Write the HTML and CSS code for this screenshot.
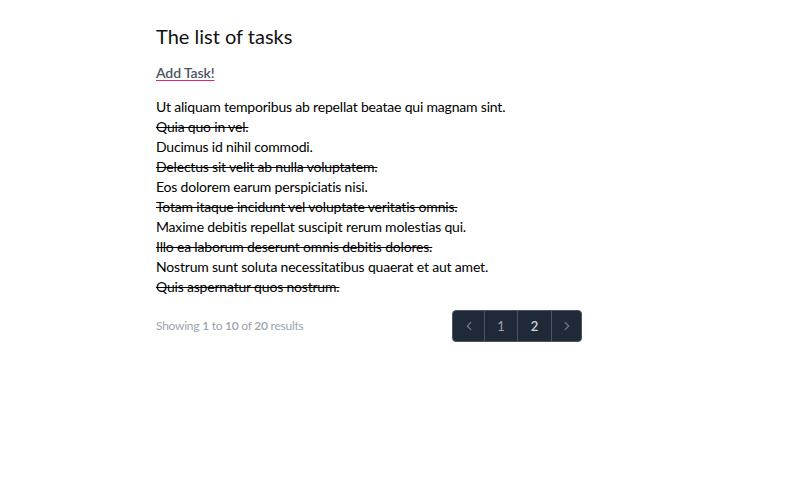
FILE: index.html
```html
<!DOCTYPE html>
<html lang="en">
<head>
<meta charset="utf-8">
<title>The list of tasks</title>
<link rel="stylesheet" href="styles.css">
</head>
<body>
<main class="page">
  <h1 class="title">The list of tasks</h1>
  <a class="add-link" href="#">Add Task!</a>
  <ul class="tasks">
    <li class="task">Ut aliquam temporibus ab repellat beatae qui magnam sint.</li>
    <li class="task done">Quia quo in vel.</li>
    <li class="task">Ducimus id nihil commodi.</li>
    <li class="task done">Delectus sit velit ab nulla voluptatem.</li>
    <li class="task">Eos dolorem earum perspiciatis nisi.</li>
    <li class="task done">Totam itaque incidunt vel voluptate veritatis omnis.</li>
    <li class="task">Maxime debitis repellat suscipit rerum molestias qui.</li>
    <li class="task done">Illo ea laborum deserunt omnis debitis dolores.</li>
    <li class="task">Nostrum sunt soluta necessitatibus quaerat et aut amet.</li>
    <li class="task done">Quis aspernatur quos nostrum.</li>
  </ul>
  <nav class="pager">
    <p class="summary">Showing <b>1</b> to <b>10</b> of <b>20</b> results</p>
    <div class="pages">
      <span class="pg pg-arrow pg-first" aria-disabled="true">
        <svg viewBox="0 0 20 20" width="14" height="14"><path d="M12.5 5 L7.5 10 L12.5 15" fill="none" stroke="currentColor" stroke-width="2" stroke-linecap="round" stroke-linejoin="round"/></svg>
      </span>
      <span class="pg pg-num pg-current">1</span>
      <a class="pg pg-num pg-link" href="#">2</a>
      <a class="pg pg-arrow pg-last" href="#">
        <svg viewBox="0 0 20 20" width="14" height="14"><path d="M7.5 5 L12.5 10 L7.5 15" fill="none" stroke="currentColor" stroke-width="2" stroke-linecap="round" stroke-linejoin="round"/></svg>
      </a>
    </div>
  </nav>
</main>
</body>
</html>
```
FILE: styles.css
```css
html, body {
  margin: 0;
  padding: 0;
  background: #ffffff;
}
body {
  font-family: Lato, "Noto Sans", sans-serif;
  color: #000000;
}
.page {
  width: 426px;
  padding: 22px 0 0 156px;
  display: flex;
  flex-direction: column;
  align-items: flex-start;
}
.title {
  margin: 0;
  font-size: 20px;
  line-height: 28px;
  font-weight: 400;
  color: #111111;
}
.add-link {
  margin-top: 13px;
  font-size: 14px;
  line-height: 20px;
  font-weight: 600;
  letter-spacing: -0.1px;
  color: #4b5563;
  text-decoration: underline;
  text-decoration-color: #db2777;
  text-underline-offset: 2px;
}
.tasks {
  list-style: none;
  margin: 14px 0 0 0;
  padding: 0;
}
.task {
  font-size: 14px;
  line-height: 20px;
  letter-spacing: -0.19px;
}
.done {
  text-decoration: line-through;
}
.pager {
  align-self: stretch;
  margin-top: 13px;
  display: flex;
  justify-content: space-between;
  align-items: center;
}
.summary {
  margin: 0;
  font-size: 12px;
  line-height: 20px;
  color: #9ca3af;
  letter-spacing: -0.25px;
}
.summary b {
  font-weight: 600;
}
.pages {
  display: flex;
  height: 32px;
  background: #1f2937;
  border: 1px solid #4b5563;
  border-radius: 4px;
  box-sizing: border-box;
}
.pg {
  display: flex;
  align-items: center;
  justify-content: center;
  box-sizing: border-box;
  font-size: 13px;
  text-decoration: none;
  border-left: 1px solid #4b5563;
}
.pg-first {
  border-left: none;
  width: 31px;
  color: #6b7280;
}
.pg-num {
  width: 33px;
}
.pg-current {
  color: #9ca3af;
}
.pg-link {
  width: 34px;
  color: #d1d5db;
  font-weight: 600;
}
.pg-last {
  width: 30px;
  color: #6b7280;
}
```
